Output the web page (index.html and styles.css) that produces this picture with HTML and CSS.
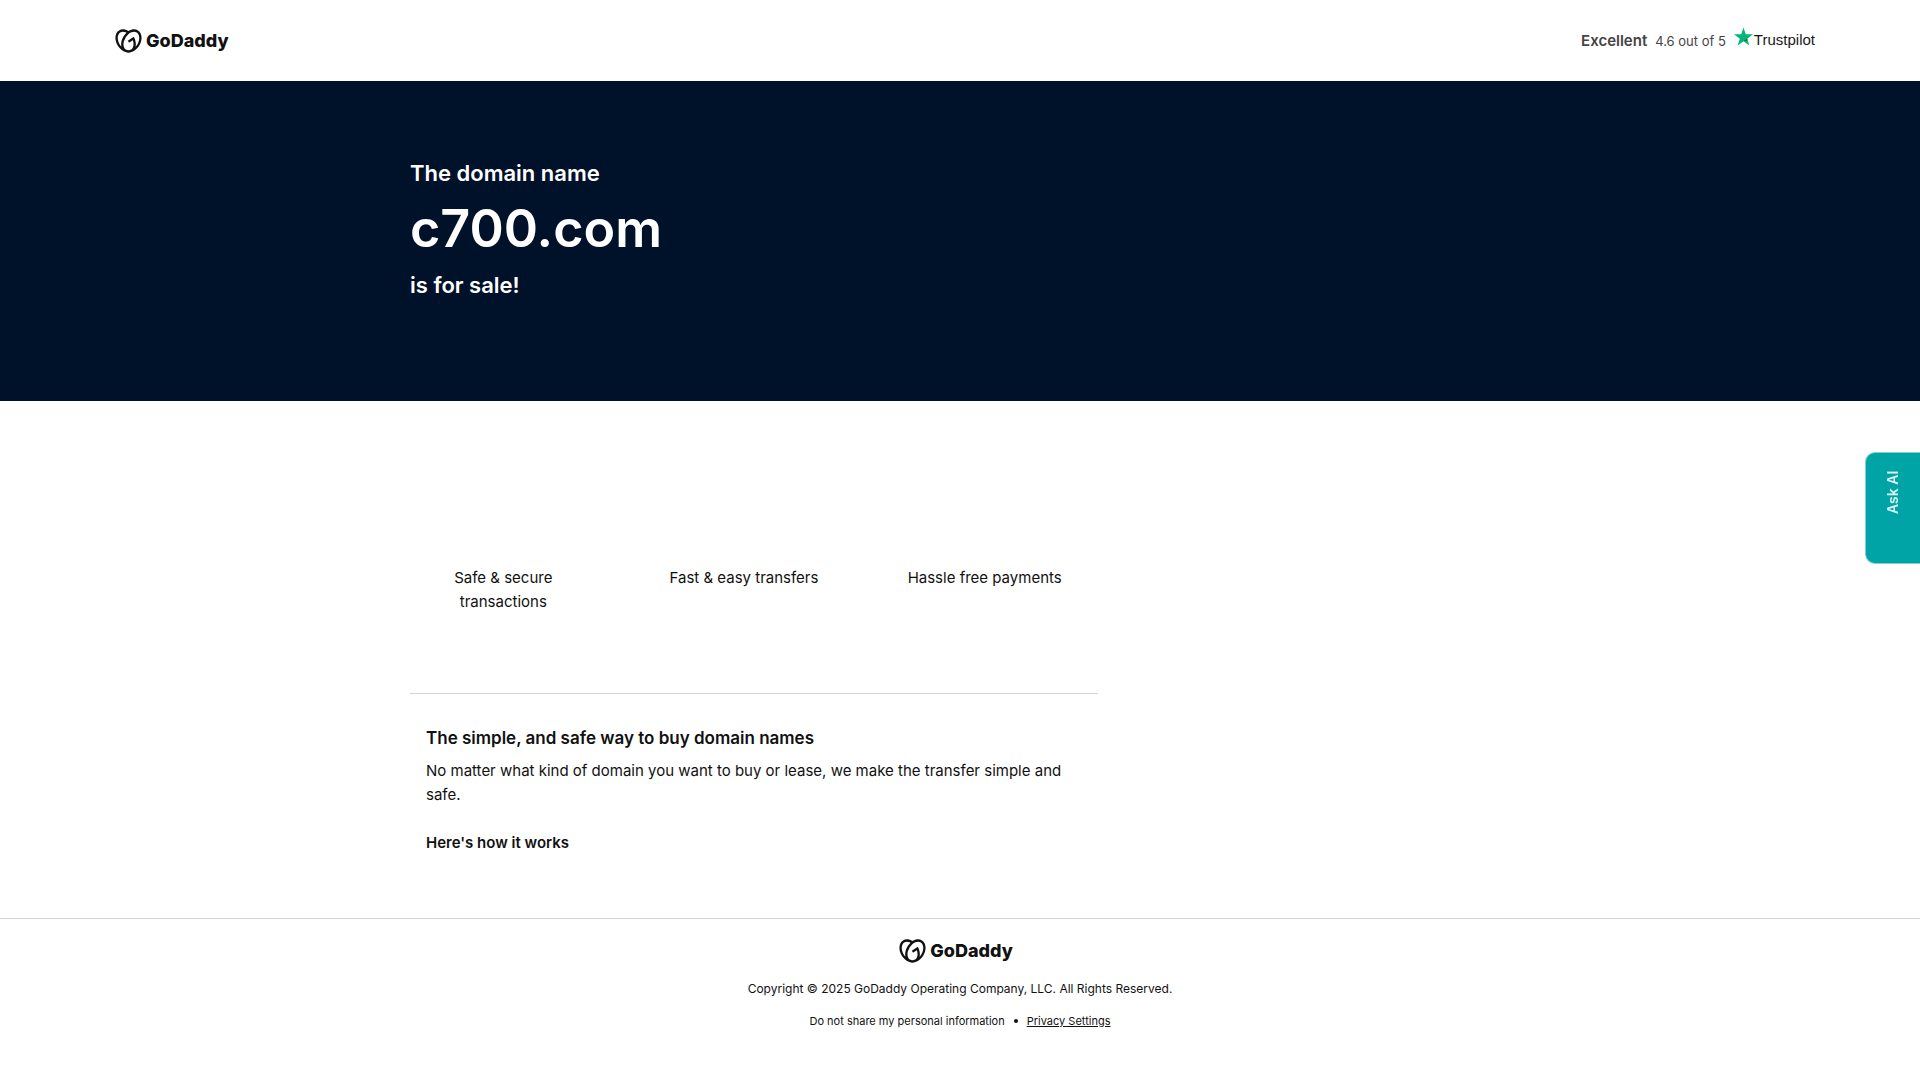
FILE: index.html
```html
<!DOCTYPE html>
<html lang="en">
<head>
    <meta charset="UTF-8">
    <meta name="viewport" content="width=device-width, initial-scale=1.0">
    <title>c700.com is for sale</title>
    <link rel="stylesheet" href="styles.css">
</head>
<body>
    <svg class="sprite" width="0" height="0" aria-hidden="true">
        <symbol id="heart" viewBox="0 1 24 22">
            <path d="M20.702 2.29c-2.494-1.554-5.778-1.187-8.706.654C9.076 1.104 5.79.736 3.3 2.29c-3.941 2.463-4.42 8.806-1.07 14.167 2.47 3.954 6.333 6.269 9.77 6.226 3.439.043 7.301-2.273 9.771-6.226 3.347-5.361 2.872-11.704-1.069-14.167zM4.042 15.328a12.838 12.838 0 01-1.546-3.541 10.12 10.12 0 01-.336-3.338c.15-1.98.956-3.524 2.27-4.345 1.315-.822 3.052-.87 4.903-.137.281.113.556.24.825.382A15.11 15.11 0 007.5 7.54c-2.035 3.255-2.655 6.878-1.945 9.765a13.247 13.247 0 01-1.514-1.98zm17.465-3.541a12.866 12.866 0 01-1.547 3.54 13.25 13.25 0 01-1.513 1.984c.635-2.589.203-5.76-1.353-8.734a.39.39 0 00-.563-.153l-4.852 3.032a.397.397 0 00-.126.546l.712 1.139a.395.395 0 00.547.126l3.145-1.965c.101.306.203.606.28.916.296 1.086.41 2.214.335 3.337-.15 1.982-.956 3.525-2.27 4.347a4.437 4.437 0 01-2.25.65h-.101a4.432 4.432 0 01-2.25-.65c-1.314-.822-2.121-2.365-2.27-4.347-.074-1.123.039-2.25.335-3.337a13.212 13.212 0 014.05-6.482 10.148 10.148 0 012.849-1.765c1.845-.733 3.586-.685 4.9.137 1.316.822 2.122 2.365 2.271 4.345a10.146 10.146 0 01-.334 3.334z"/>
        </symbol>
    </svg>

    <header class="site-header">
        <a class="logo" href="#">
            <svg class="logo-mark" aria-hidden="true"><use href="#heart"/></svg>
            <span>GoDaddy</span>
        </a>
        <a class="rating" href="#">
            <strong>Excellent</strong>
            <span class="score">4.6 out of 5</span>
            <span class="trustpilot">
                <svg class="star" viewBox="0 0 20 19" aria-hidden="true">
                    <path fill="#00b67a" d="M20 7.25h-7.64L10 0 7.64 7.25H0l6.18 4.49L3.82 19 10 14.5l6.18 4.5-2.36-7.26z"/>
                    <path fill="#005128" d="M14.35 13.37l-.53-1.63L10 14.5z"/>
                </svg>
                Trustpilot
            </span>
        </a>
    </header>

    <section class="hero">
        <h1 class="container">
            <span class="lead">The domain name</span>
            <span class="domain">c700.com</span>
            <span class="lead">is for sale!</span>
        </h1>
    </section>

    <main class="container">
        <div class="content">
            <ul class="features">
                <li>Safe &amp; secure transactions</li>
                <li>Fast &amp; easy transfers</li>
                <li>Hassle free payments</li>
            </ul>
            <div class="about">
                <h2>The simple, and safe way to buy domain names</h2>
                <p>No matter what kind of domain you want to buy or lease, we make the transfer simple and safe.</p>
                <h3>Here's how it works</h3>
            </div>
        </div>
    </main>

    <footer class="site-footer">
        <a class="logo" href="#">
            <svg class="logo-mark" aria-hidden="true"><use href="#heart"/></svg>
            <span>GoDaddy</span>
        </a>
        <p class="copyright">Copyright © 2025 GoDaddy Operating Company, LLC. All Rights Reserved.</p>
        <div class="legal">
            <a href="#">Do not share my personal information</a>
            <span class="dot"></span>
            <a class="underlined" href="#">Privacy Settings</a>
        </div>
    </footer>

    <button class="ask-ai" type="button">Ask AI</button>
</body>
</html>
```
FILE: styles.css
```css
:root {
    --ink: #111;
    --navy: #00112a;
    --teal: #00a4a6;
    --line: #d4d4d4;
}

* {
    box-sizing: border-box;
}

body {
    margin: 0;
    background: #fff;
    color: var(--ink);
    font-family: 'Inter', sans-serif;
    font-size: 15px;
    line-height: 24px;
}

h1, h2, h3, p, ul {
    margin: 0;
    padding: 0;
}

a {
    color: inherit;
    text-decoration: none;
}

.sprite {
    display: block;
}

.container {
    width: 100%;
    max-width: 1100px;
    margin: 0 auto;
}

.site-header {
    display: flex;
    align-items: center;
    justify-content: space-between;
    height: 81px;
    padding: 0 105px 0 115px;
}

.logo {
    display: flex;
    align-items: center;
    gap: 4px;
    padding-right: 8px;
    font-size: 18px;
    font-weight: 800;
}

.logo-mark {
    width: 27px;
    height: 24px;
    fill: currentColor;
}

.rating {
    display: flex;
    align-items: center;
    gap: 8px;
    color: #444;
}

.rating strong {
    font-weight: 600;
}

.score {
    font-size: 13px;
}

.trustpilot {
    display: flex;
    align-items: center;
    gap: 1px;
    padding-bottom: 2px;
    color: #191919;
    font-family: 'Liberation Sans', sans-serif;
}

.star {
    width: 19px;
    height: 19px;
    margin-bottom: 6px;
}

.hero {
    padding: 72px 0 96px;
    background: var(--navy);
    color: #fff;
}

.hero h1 {
    display: flex;
    flex-direction: column;
    gap: 8px;
    font-weight: 600;
}

.lead {
    font-size: 22px;
    line-height: 40px;
}

.domain {
    font-size: 52px;
    line-height: 56px;
}

.content {
    width: 688px;
    max-width: 100%;
}

.features {
    display: grid;
    grid-template-columns: repeat(3, 1fr);
    gap: 54px;
    padding: 165px 20px 79px 0;
    border-bottom: 1px solid var(--line);
    list-style: none;
    text-align: center;
}

.about {
    padding: 32px 16px 63px;
}

.about h2 {
    margin-bottom: 9px;
    font-size: 17px;
    font-weight: 600;
}

.about h3 {
    margin-top: 24px;
    font-size: 15px;
    font-weight: 600;
}

.site-footer {
    display: flex;
    flex-direction: column;
    align-items: center;
    padding: 20px 0 40px;
    border-top: 1px solid var(--line);
}

.copyright {
    margin-top: 14px;
    font-size: 12px;
}

.legal {
    display: flex;
    align-items: center;
    gap: 9px;
    margin-top: 8px;
    font-size: 11px;
}

.dot {
    width: 4px;
    height: 4px;
    border-radius: 50%;
    background: var(--ink);
}

.underlined {
    text-decoration: underline;
}

.ask-ai {
    position: fixed;
    top: 452px;
    right: 0;
    width: 55px;
    height: 112px;
    padding: 0 0 18px;
    border: 1px solid #7fd1d2;
    border-left: 0;
    border-radius: 0 10px 10px 0;
    background: var(--teal);
    color: #d9f6f6;
    font: 600 14px/20px 'Inter', sans-serif;
    text-align: end;
    writing-mode: vertical-rl;
    transform: rotate(180deg);
    cursor: pointer;
}
```
